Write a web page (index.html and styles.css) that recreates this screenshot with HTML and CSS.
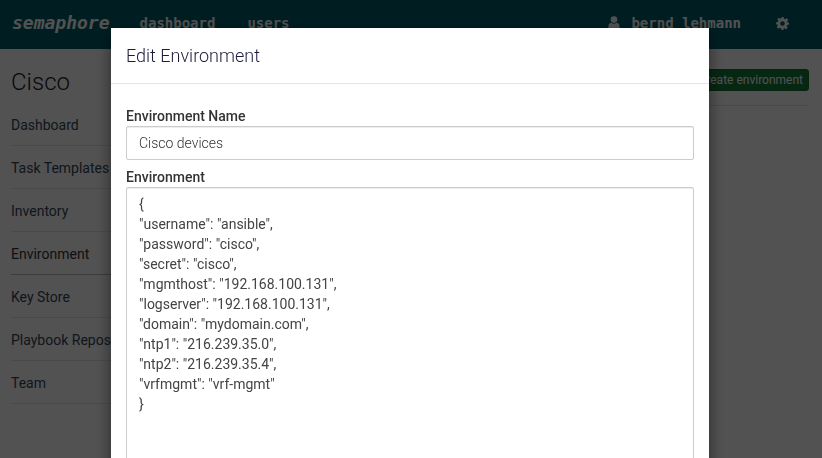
FILE: index.html
```html
<!DOCTYPE html>
<html lang="en">
<head>
<meta charset="utf-8">
<title>Semaphore</title>
<link rel="stylesheet" href="styles.css">
</head>
<body>
<header class="navbar">
  <a class="brand">semaphore</a>
  <a class="nav-link">dashboard</a>
  <a class="nav-link">users</a>
  <div class="nav-right">
    <svg class="icon-user" viewBox="0 0 12 14" width="12" height="14"><circle cx="6" cy="3.6" r="3.3"/><path d="M0.4 13.2V10.2C0.4 8.2 2 7 3.4 6.8 4.2 7.5 5 7.8 6 7.8S7.8 7.5 8.6 6.8C10 7 11.6 8.2 11.6 10.2V13.2C11.6 13.7 11.3 14 10.8 14H1.2C.7 14 .4 13.7 .4 13.2Z"/></svg>
    <a class="nav-link user-name">bernd lehmann</a>
    <svg class="icon-gear" viewBox="0 0 24 24" width="13" height="13"><path fill-rule="evenodd" d="M10 0h4l.6 3.3 2.3 1 2.8-1.9 2.9 2.9-1.9 2.8 1 2.3L24 10v4l-3.3.6-1 2.3 1.9 2.8-2.9 2.9-2.8-1.9-2.3 1L14 24h-4l-.6-3.3-2.3-1-2.8 1.9-2.9-2.9 1.9-2.8-1-2.3L0 14v-4l3.3-.6 1-2.3L2.4 4.3l2.9-2.9 2.8 1.9 2.3-1L10 0ZM12 7.8a4.2 4.2 0 1 0 0 8.4 4.2 4.2 0 0 0 0-8.4Z"/></svg>
  </div>
</header>
<main class="page">
  <aside class="sidebar">
    <h1 class="project">Cisco</h1>
    <ul class="side-list">
      <li class="side-item">Dashboard</li>
      <li class="side-item">Task Templates</li>
      <li class="side-item">Inventory</li>
      <li class="side-item side-active">Environment</li>
      <li class="side-item">Key Store</li>
      <li class="side-item">Playbook Repositories</li>
      <li class="side-item">Team</li>
    </ul>
  </aside>
  <section class="content">
    <div class="toolbar">
      <button class="btn-create" type="button">create environment</button>
    </div>
  </section>
</main>
<div class="backdrop"></div>
<div class="modal">
  <div class="dialog">
    <div class="dialog-header"><h2 class="dialog-title">Edit Environment</h2></div>
    <form class="dialog-body">
      <label class="field-label" for="env-name">Environment Name</label>
      <input class="field-input" id="env-name" type="text" value="Cisco devices">
      <label class="field-label" for="env-json">Environment</label>
      <textarea class="field-area" id="env-json" spellcheck="false">{
"username": "ansible",
"password": "cisco",
"secret": "cisco",
"mgmthost": "192.168.100.131",
"logserver": "192.168.100.131",
"domain": "mydomain.com",
"ntp1": "216.239.35.0",
"ntp2": "216.239.35.4",
"vrfmgmt": "vrf-mgmt"
}</textarea>
    </form>
  </div>
</div>
</body>
</html>
```

FILE: styles.css
```css
* { box-sizing: border-box; }
html, body { height: 100%; }
body {
  margin: 0;
  overflow: hidden;
  background: #fff;
  color: #333;
  font-family: Roboto, "Liberation Sans", sans-serif;
  font-size: 14px;
  line-height: 20px;
}
.navbar {
  display: flex;
  align-items: center;
  height: 49px;
  padding: 0 12px 3px;
  background: #005f6b;
  font-family: "DejaVu Sans Mono", monospace;
  color: #fff;
}
.brand {
  font-size: 18px;
  font-weight: 700;
  font-style: italic;
  margin-right: 30px;
}
.nav-link {
  font-size: 14px;
  font-weight: 700;
  margin-right: 32px;
}
.nav-right {
  display: flex;
  align-items: center;
  margin-left: auto;
  margin-right: 21px;
}
.icon-user { fill: #fff; margin-right: 11px; }
.user-name { margin-right: 35px; }
.icon-gear { fill: #fff; }
.page {
  display: flex;
  padding: 0 13px 0 11px;
}
.sidebar { flex: 0 0 130px; }
.project {
  margin: 20px 0 8px;
  font-size: 24px;
  line-height: 26px;
  font-weight: 300;
  color: #222;
}
.side-list { margin: 0; padding: 0; list-style: none; }
.side-item {
  height: 43px;
  padding-top: 12px;
  border-bottom: 1px solid #e4e4e4;
  white-space: nowrap;
  overflow: hidden;
  color: #34465a;
}
.side-active { color: #333; border-bottom-color: #bbb; }
.content { flex: 1; padding-left: 0; }
.toolbar {
  display: flex;
  justify-content: flex-end;
  padding: 20px 0 14px;
  border-bottom: 1px solid #e4e4e4;
  height: 57px;
}
.btn-create {
  height: 22px;
  padding: 0 5px 0 6px;
  border: 1px solid #146a33;
  border-radius: 3px;
  background: #157a3a;
  color: #fff;
  font-family: inherit;
  font-size: 12px;
  line-height: 18px;
}
.backdrop {
  position: fixed;
  inset: 0;
  background: #000;
  opacity: .68;
}
.modal {
  position: fixed;
  inset: 0;
  overflow: hidden;
}
.dialog {
  width: 598px;
  margin: 28px auto 0;
  transform: translateX(-1px);
  background: #fff;
  box-shadow: 0 5px 15px rgba(0, 0, 0, .5);
}
.dialog-header {
  height: 56px;
  padding: 15px;
  border-bottom: 1px solid #e5e5e5;
}
.dialog-title {
  margin: 0;
  font-size: 18px;
  line-height: 26px;
  font-weight: 300;
  color: #1c1c3a;
}
.dialog-body {
  padding: 23px 15px 15px;
}
.field-label {
  display: block;
  height: 19px;
  font-weight: 500;
  line-height: 18px;
}
.field-input, .field-area {
  display: block;
  width: 100%;
  padding: 6px 12px;
  border: 1px solid #ccc;
  border-radius: 2px;
  background: #fff;
  color: #555;
  font-family: inherit;
  font-size: 14px;
  line-height: 20px;
  box-shadow: inset 0 1px 1px rgba(0, 0, 0, .075);
  outline: 0;
}
.field-input { height: 34px; margin-bottom: 8px; font-weight: 300; color: #333; }
.field-area { height: 340px; resize: none; overflow: hidden; color: #444; }
```
